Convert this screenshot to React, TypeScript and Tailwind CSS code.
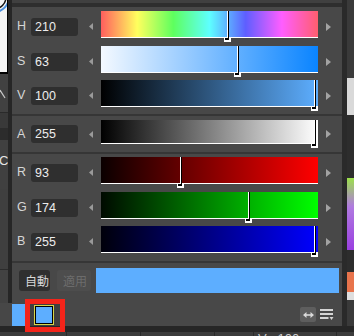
import React from "react";

type Row = {
  label: string;
  value: string;
  grad: string;
  frac: number;
  barH: string;
  rowCls: string;
  innerH: string;
  sliderH: string;
};

const hsv: Row[] = [
  {
    label: "H",
    value: "210",
    grad: "bg-[linear-gradient(to_right,#ff5e5e,#ffff5e_16.67%,#5eff5e_33.33%,#5effff_50%,#5e5eff_66.67%,#ff5eff_83.33%,#ff5e6e)]",
    frac: 210 / 360,
    barH: "h-[26px]",
    rowCls: "h-[35px] pt-[4px]",
    innerH: "h-[31px]",
    sliderH: "h-[31px]",
  },
  {
    label: "S",
    value: "63",
    grad: "bg-[linear-gradient(to_right,#f4f9ff,#0a84ff)]",
    frac: 0.63,
    barH: "h-[26px]",
    rowCls: "h-[34px] pt-[4px]",
    innerH: "h-[31px]",
    sliderH: "h-[31px]",
  },
  {
    label: "V",
    value: "100",
    grad: "bg-[linear-gradient(to_right,#000000,#5daeff)]",
    frac: 1,
    barH: "h-[26px]",
    rowCls: "h-[35px] pt-[4px]",
    innerH: "h-[31px]",
    sliderH: "h-[31px]",
  },
];

const alpha: Row = {
  label: "A",
  value: "255",
  grad: "bg-[linear-gradient(to_right,#000000,#ffffff)]",
  frac: 1,
  barH: "h-[23px]",
  rowCls: "h-[34px] pt-[2px]",
  innerH: "h-[28px]",
  sliderH: "h-[28px]",
};

const rgb: Row[] = [
  {
    label: "R",
    value: "93",
    grad: "bg-[linear-gradient(to_right,#0a0000,#ff0000)]",
    frac: 93 / 255,
    barH: "h-[26px]",
    rowCls: "h-[35px] pt-[3px]",
    innerH: "h-[31px]",
    sliderH: "h-[31px]",
  },
  {
    label: "G",
    value: "174",
    grad: "bg-[linear-gradient(to_right,#000a00,#00ff00)]",
    frac: 174 / 255,
    barH: "h-[26px]",
    rowCls: "h-[34px] pt-[3px]",
    innerH: "h-[31px]",
    sliderH: "h-[31px]",
  },
  {
    label: "B",
    value: "255",
    grad: "bg-[linear-gradient(to_right,#00000a,#0000ff)]",
    frac: 1,
    barH: "h-[26px]",
    rowCls: "h-[38px] pt-[3px]",
    innerH: "h-[31px]",
    sliderH: "h-[31px]",
  },
];

function LeftArrow() {
  return (
    <svg width="4" height="7" viewBox="0 0 4 7" className="shrink-0 block">
      <path d="M4 0 L0 3.5 L4 7 Z" fill="#9a9a9a" />
    </svg>
  );
}

function RightArrow() {
  return (
    <svg width="5" height="8" viewBox="0 0 5 8" className="shrink-0 block">
      <path d="M0 0 L5 4 L0 8 Z" fill="#a3a3a3" />
    </svg>
  );
}

function SliderRow({ r }: { r: Row }) {
  const pos = Math.round(Math.min(r.frac * 216, 213));
  return (
    <div className={r.rowCls}>
      <div className={`flex items-center ${r.innerH}`}>
        <div className="w-[19px] pl-[5px] text-[12.5px] leading-none text-[#d6d6d6]">{r.label}</div>
        <div className="w-[47px] h-[18px] rounded-[3px] bg-[#2f2f2f] pl-[4px] text-[12.5px] leading-[18px] text-[#ececec]">
          {r.value}
        </div>
        <div className="ml-[11px]">
          <LeftArrow />
        </div>
        <div className={`relative ml-[8px] w-[217px] self-start flex flex-col ${r.sliderH}`}>
          <div className={`${r.barH} ${r.grad}`} />
          <div className="h-px bg-white" />
          <div
            className="absolute top-0 bottom-[4px] w-[2px] bg-black border-l border-white"
            style={{ left: pos }}
          />
          <div
            className="absolute bottom-0 h-[4px] w-[7px] bg-white"
            style={{ left: pos - 3 }}
          >
            <div className="ml-px h-[2px] w-[4px] bg-black" />
          </div>
        </div>
        <div className="ml-[8px]">
          <RightArrow />
        </div>
      </div>
    </div>
  );
}

function LeftStrip() {
  return (
    <div className="w-[12px] shrink-0 flex flex-col h-[326px]">
      <div className="flex h-[303px]">
        <div className="w-[8px] flex flex-col">
          <div className="h-[72px] bg-[#f4f4f4] border-r border-black overflow-hidden">
            <svg width="8" height="72" viewBox="0 0 8 72" className="block">
              <circle cx="-6" cy="-3" r="12" fill="none" stroke="#111" strokeWidth="1.5" />
              <circle cx="-6" cy="-3" r="15" fill="none" stroke="#4a8fdc" strokeWidth="2" />
            </svg>
          </div>
          <div className="h-[2px] bg-black" />
          <div className="h-[38px] bg-[#414141]">
            <svg width="8" height="38" viewBox="0 0 8 38" className="block">
              <path d="M0 16 L5 24" stroke="#c8c8c8" strokeWidth="1.2" />
            </svg>
          </div>
          <div className="h-[16px] bg-[#393939] border-t border-[#2a2a2a]" />
          <div className="h-[12px] bg-[#2c2c2c]" />
          <div className="h-[49px] bg-[#404040] overflow-hidden pt-[14px]">
            <div className="-ml-[1px] whitespace-nowrap text-[13px] leading-none text-[#e6e6e6]">Cc</div>
          </div>
          <div className="h-[80px] bg-[#3f3f3f]" />
          <div className="h-px bg-[#2c2c2c]" />
          <div className="flex-1 bg-[#424242]" />
        </div>
        <div className="w-[4px] bg-[#262626]" />
      </div>
      <div className="flex-1 bg-[#474747]" />
    </div>
  );
}

function RightStrip() {
  return (
    <div className="w-[12px] shrink-0 flex h-[326px]">
      <div className="w-[5px] bg-[#2a2a2a]" />
      <div className="w-[7px] flex flex-col">
        <div className="h-[78px] bg-[#3a3a3a]" />
        <div className="h-[37px] bg-[#d9d9d9]" />
        <div className="h-[63px] bg-[#2d2d2d]" />
        <div className="h-[72px] bg-[linear-gradient(to_bottom,#9be04a,#b07ae0_40%,#9a3fe0)]" />
        <div className="h-[22px] bg-[#2d2d2d]" />
        <div className="h-[20px] bg-[#e8744c]" />
        <div className="h-[8px] bg-[#dedede]" />
        <div className="flex-1 bg-[#3a3a3a]" />
      </div>
    </div>
  );
}

function Separator({ cls }: { cls: string }) {
  return (
    <div className={cls}>
      <div className="h-[2px] bg-[#363636]" />
    </div>
  );
}

export default function App() {
  return (
    <div className="w-[354px] h-[336px] overflow-hidden flex flex-col bg-[#3a3a3a] font-['Liberation_Sans',Arial,sans-serif]">
      <div className="flex h-[326px]">
        <LeftStrip />
        <div className="w-[330px] shrink-0 flex flex-col bg-[#484848]">
          <div className="h-[3px] bg-[#404040]" />
          <div className="h-[4px] bg-[#2e2e2e]" />
          {hsv.map((r) => (
            <SliderRow key={r.label} r={r} />
          ))}
          <Separator cls="h-[7px] pt-[3px]" />
          <SliderRow r={alpha} />
          <Separator cls="h-[2px]" />
          {rgb.map((r) => (
            <SliderRow key={r.label} r={r} />
          ))}
          <Separator cls="h-[2px]" />
          <div className="h-[30px] flex items-center pl-[7px] pr-[3px] pt-[5px] font-['Noto_Sans_CJK_JP',sans-serif]">
            <div className="w-[31px] h-[21px] rounded-[3px] bg-[#2f2f2f] pl-[6px] text-[12px] leading-[21px] text-[#d8d8d8]">
              自動
            </div>
            <div className="ml-[7px] w-[34px] h-[21px] rounded-[3px] bg-[#4d4d4d] pl-[6px] text-[12px] leading-[21px] text-[#6c6c6c]">
              適用
            </div>
            <div className="ml-[5px] flex-1 h-[25px] bg-[#5daeff]" />
          </div>
          <div className="relative h-[33px] flex items-end">
            <div className="w-[13px] h-[22px] bg-[#5daeff]" />
            <div className="ml-[5px] w-[30px] h-[22px] bg-[#3f3f3f] pl-[4px] pt-[1px]">
              <div className="w-[20px] h-[20px] border border-[#d6d64a]">
                <div className="w-full h-full border border-black bg-[#5daeff]" />
              </div>
            </div>
            <div className="ml-auto mb-[4px] flex items-center pr-[8px]">
              <div className="w-[16px] h-[15px] rounded-[2px] bg-[#5e5e5e] flex items-center justify-center">
                <svg width="11" height="6" viewBox="0 0 11 6" className="block">
                  <path d="M0 3 L3.5 0 V6 Z M11 3 L7.5 0 V6 Z" fill="#dadada" />
                  <path d="M3 3 H8" stroke="#dadada" strokeWidth="1.6" />
                </svg>
              </div>
              <svg width="14" height="13" viewBox="0 0 14 13" className="ml-[4px] block">
                <rect x="0" y="1" width="13" height="2" fill="#d4d4d4" />
                <rect x="0" y="5" width="13" height="2" fill="#d4d4d4" />
                <rect x="0" y="9" width="8.5" height="2" fill="#d4d4d4" />
                <path d="M9.5 9 L13.5 9 L11.5 12 Z" fill="#d4d4d4" />
              </svg>
            </div>
            <div className="absolute left-[13px] top-[6px] w-[40px] h-[33px] border-[5px] border-[#f4241a] z-10" />
          </div>
        </div>
        <RightStrip />
      </div>
      <div className="h-[6px] bg-[#262626]" />
      <div className="relative flex-1 flex bg-[#3c3c3c] overflow-hidden">
        <div className="w-[67px] border-r border-[#2a2a2a]" />
        <div className="w-[74px] border-r border-[#2a2a2a]" />
        <div className="w-[74px] border-r border-[#2a2a2a]" />
        <div className="w-[39px] border-r border-[#2a2a2a]" />
        <div className="w-[83px] border-r border-[#2a2a2a] pl-[4px] text-[13px] leading-[13px] text-[#cccccc] whitespace-nowrap">
          V&nbsp;&nbsp;&nbsp;100
        </div>
        <div className="flex-1" />
      </div>
    </div>
  );
}
